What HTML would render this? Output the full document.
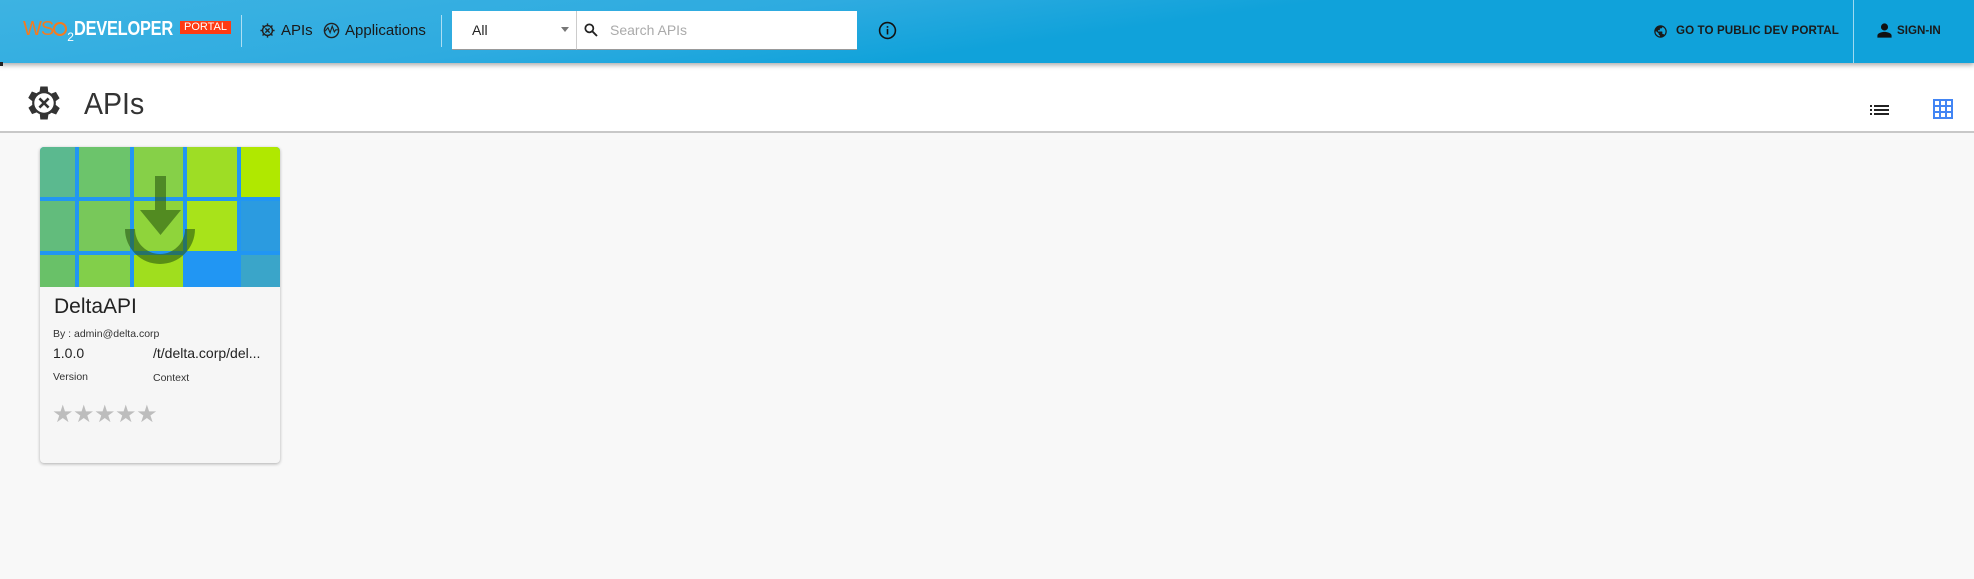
<!DOCTYPE html>
<html><head><meta charset="utf-8"><style>
*{margin:0;padding:0;box-sizing:border-box}
body{width:1974px;height:579px;overflow:hidden;background:#f8f8f8;font-family:"Liberation Sans",sans-serif;position:relative}
.hdr{position:absolute;left:0;top:0;width:1974px;height:63px;background:linear-gradient(172deg,#3db3e2 0%,#2eabe0 35%,#10a2da 55%,#10a2da 100%);box-shadow:0 2px 5px rgba(0,0,0,.35);z-index:2}
.abs{position:absolute}
.nav{color:#1a1a1a;font-size:15px;white-space:nowrap}
.sub{position:absolute;left:0;top:63px;width:1974px;height:70px;background:#fff;border-bottom:2px solid #c8c8c8}
.card{position:absolute;left:40px;top:147px;width:240px;height:316px;background:#f6f6f6;border-radius:4px;box-shadow:0 1px 3px rgba(0,0,0,.3);overflow:hidden}
</style></head><body>
<div class="hdr">
  <div class="abs" style="left:23px;top:17px;font-size:20px;line-height:24px;white-space:nowrap">
    <span style="color:#f47b20;letter-spacing:-1px">WS</span><span style="display:inline-block;width:14px;height:14px;border-radius:50%;border:2px solid #f47b20;vertical-align:-1px"></span><span style="color:#fff;font-size:12px;vertical-align:-6px">2</span><span style="color:#fff;font-weight:bold;display:inline-block;transform:scaleX(.82);transform-origin:left;letter-spacing:-.3px">DEVELOPER</span>
  </div>
  <div class="abs" style="left:180px;top:21px;width:51px;height:13px;background:#ff3b12;color:#fff;font-size:11px;line-height:13px;text-align:center">PORTAL</div>
  <div class="abs" style="left:241px;top:15px;width:1px;height:32px;background:rgba(255,255,255,.6)"></div>
  <svg class="abs" style="left:259px;top:22px" width="17" height="17" viewBox="0 0 24 24"><circle cx="12" cy="12" r="7" fill="none" stroke="#222" stroke-width="2"/><path d="M12 2v4M12 18v4M2 12h4M18 12h4M5 5l3 3M16 16l3 3M19 5l-3 3M5 19l3-3M9 9l6 6M15 9l-6 6" stroke="#222" stroke-width="2"/></svg>
  <div class="abs nav" style="left:281px;top:22px">APIs</div>
  <svg class="abs" style="left:323px;top:22px" width="17" height="17" viewBox="0 0 24 24"><circle cx="12" cy="12" r="10" fill="none" stroke="#222" stroke-width="2"/><path d="M3 13l4-5 3 7 3-9 3 8 2-3h3" fill="none" stroke="#222" stroke-width="1.6"/></svg>
  <div class="abs nav" style="left:345px;top:22px">Applications</div>
  <div class="abs" style="left:441px;top:15px;width:1px;height:32px;background:rgba(255,255,255,.6)"></div>
  <div class="abs" style="left:452px;top:11px;width:125px;height:39px;background:#fff;border-bottom:1px solid #999;border-right:1px solid #ccc"></div>
  <div class="abs" style="left:472px;top:22px;font-size:14px;color:#222">All</div>
  <div class="abs" style="left:561px;top:27px;width:0;height:0;border-left:4px solid transparent;border-right:4px solid transparent;border-top:5px solid #777"></div>
  <div class="abs" style="left:577px;top:11px;width:280px;height:39px;background:#fff;border-bottom:1px solid #999"></div>
  <svg class="abs" style="left:583px;top:22px" width="16" height="16" viewBox="0 0 24 24"><circle cx="9.5" cy="9.5" r="6" fill="none" stroke="#222" stroke-width="2.6"/><path d="M14 14l7 7" stroke="#222" stroke-width="2.8"/></svg>
  <div class="abs" style="left:610px;top:22px;font-size:14px;color:#aaa">Search APIs</div>
  <svg class="abs" style="left:878px;top:21px" width="19" height="19" viewBox="0 0 24 24"><circle cx="12" cy="12" r="10" fill="none" stroke="#111" stroke-width="2"/><rect x="11" y="10" width="2" height="7" fill="#111"/><rect x="11" y="6.5" width="2" height="2" fill="#111"/></svg>
  <svg class="abs" style="left:1653px;top:24px" width="15" height="15" viewBox="0 0 24 24"><path fill="#1a1a1a" d="M12 2a10 10 0 100 20 10 10 0 000-20zm-1 17.9A8 8 0 014 12l1-.5L9 15v1c0 1 1 2 2 2zm6.9-2.5c-.3-.8-1-1.4-1.9-1.4h-1v-3c0-.6-.4-1-1-1H8v-2h2c.6 0 1-.4 1-1V7h2c1.1 0 2-.9 2-2v-.4a8 8 0 012.9 12.8z"/></svg>
  <div class="abs" style="left:1676px;top:24px;font-size:11.6px;font-weight:bold;color:#1a1a1a;letter-spacing:.1px">GO TO PUBLIC DEV PORTAL</div>
  <div class="abs" style="left:1853px;top:0;width:1px;height:63px;background:rgba(255,255,255,.6)"></div>
  <svg class="abs" style="left:1876px;top:22px" width="17" height="17" viewBox="0 0 24 24"><path fill="#111" d="M12 12a5 5 0 100-10 5 5 0 000 10zm0 2c-3.3 0-10 1.7-10 5v3h20v-3c0-3.3-6.7-5-10-5z"/></svg>
  <div class="abs" style="left:1897px;top:24px;font-size:11.6px;font-weight:bold;color:#1a1a1a">SIGN-IN</div>
</div>
<div class="abs" style="left:0;top:62px;width:3px;height:4px;background:#222;z-index:3"></div>
<div class="sub">
  <svg class="abs" style="left:22px;top:18px" width="44" height="44" viewBox="0 0 24 24"><path fill="#333" d="M19.4 13a7.5 7.5 0 000-2l2.1-1.6-2-3.5-2.5 1a7 7 0 00-1.7-1L15 3h-4l-.4 2.7a7 7 0 00-1.7 1l-2.5-1-2 3.5L6.6 11a7.5 7.5 0 000 2l-2.1 1.6 2 3.5 2.5-1a7 7 0 001.7 1L11 21h4l.4-2.7a7 7 0 001.7-1l2.5 1 2-3.5z" transform="translate(-1 0)"/><circle cx="12" cy="12" r="5.3" fill="#fff"/><path d="M9.5 9.5l5 5M14.5 9.5l-5 5" stroke="#333" stroke-width="1.4"/></svg>
  <div class="abs" style="left:84px;top:23px;font-size:31px;color:#333;transform:scaleX(.92);transform-origin:left">APIs</div>
  <svg class="abs" style="left:1870px;top:42px" width="19" height="10" viewBox="0 0 19 10"><rect x="0" y="0" width="2" height="2" fill="#222"/><rect x="4" y="0" width="15" height="2" fill="#222"/><rect x="0" y="4" width="2" height="2" fill="#222"/><rect x="4" y="4" width="15" height="2" fill="#222"/><rect x="0" y="8" width="2" height="2" fill="#222"/><rect x="4" y="8" width="15" height="2" fill="#222"/></svg>
  <svg class="abs" style="left:1933px;top:36px" width="20" height="20" viewBox="0 0 20 20"><rect x="1" y="1" width="18" height="18" fill="none" stroke="#4285f4" stroke-width="2"/><path d="M7 1v18M13 1v18M1 7h18M1 13h18" stroke="#4285f4" stroke-width="2"/></svg>
</div>
<div class="card">
  <svg class="abs" style="left:0;top:0" width="240" height="140" viewBox="0 0 240 140">
    <rect width="240" height="140" fill="#2196f3"/>
    <rect x="0" y="0" width="35" height="50" fill="#5bb98f"/><rect x="39" y="0" width="51" height="50" fill="#6cc46b"/><rect x="94" y="0" width="49" height="50" fill="#86d048"/><rect x="147" y="0" width="50" height="50" fill="#9edd25"/><rect x="201" y="0" width="39" height="50" fill="#b0e800"/>
    <rect x="0" y="54" width="35" height="50" fill="#62bc7c"/><rect x="39" y="54" width="51" height="50" fill="#78c85a"/><rect x="94" y="54" width="49" height="50" fill="#8fd43b"/><rect x="147" y="54" width="50" height="50" fill="#a8e31a"/><rect x="201" y="54" width="39" height="50" fill="#2b9be0"/>
    <rect x="0" y="108" width="35" height="32" fill="#69c168"/><rect x="39" y="108" width="51" height="32" fill="#82cf4a"/><rect x="94" y="108" width="49" height="32" fill="#a0de1e"/><rect x="147" y="108" width="50" height="32" fill="#2196f3"/><rect x="201" y="108" width="39" height="32" fill="#3aa5c9"/>
    <path d="M115 29h11v34h15l-20.5 25L100 63h15z" fill="#2a5a10" opacity=".6"/>
    <path d="M85 82a35 35 0 0070 0h-10a25 25 0 01-50 0z" fill="#2a5a10" opacity=".6"/>
  </svg>
  <div class="abs" style="left:14px;top:148px;font-size:21px;color:#222">DeltaAPI</div>
  <div class="abs" style="left:13px;top:181px;font-size:10.5px;color:#333">By : admin@delta.corp</div>
  <div class="abs" style="left:13px;top:198px;font-size:14px;color:#222">1.0.0</div>
  <div class="abs" style="left:113px;top:198px;font-size:14px;color:#222">/t/delta.corp/del...</div>
  <div class="abs" style="left:13px;top:224px;font-size:10.5px;color:#333">Version</div>
  <div class="abs" style="left:113px;top:225px;font-size:10.5px;color:#333">Context</div>
  <div class="abs" style="left:12px;top:253px;font-size:24px;color:#bdbdbd;letter-spacing:-.5px">★★★★★</div>
</div>
</body></html>
